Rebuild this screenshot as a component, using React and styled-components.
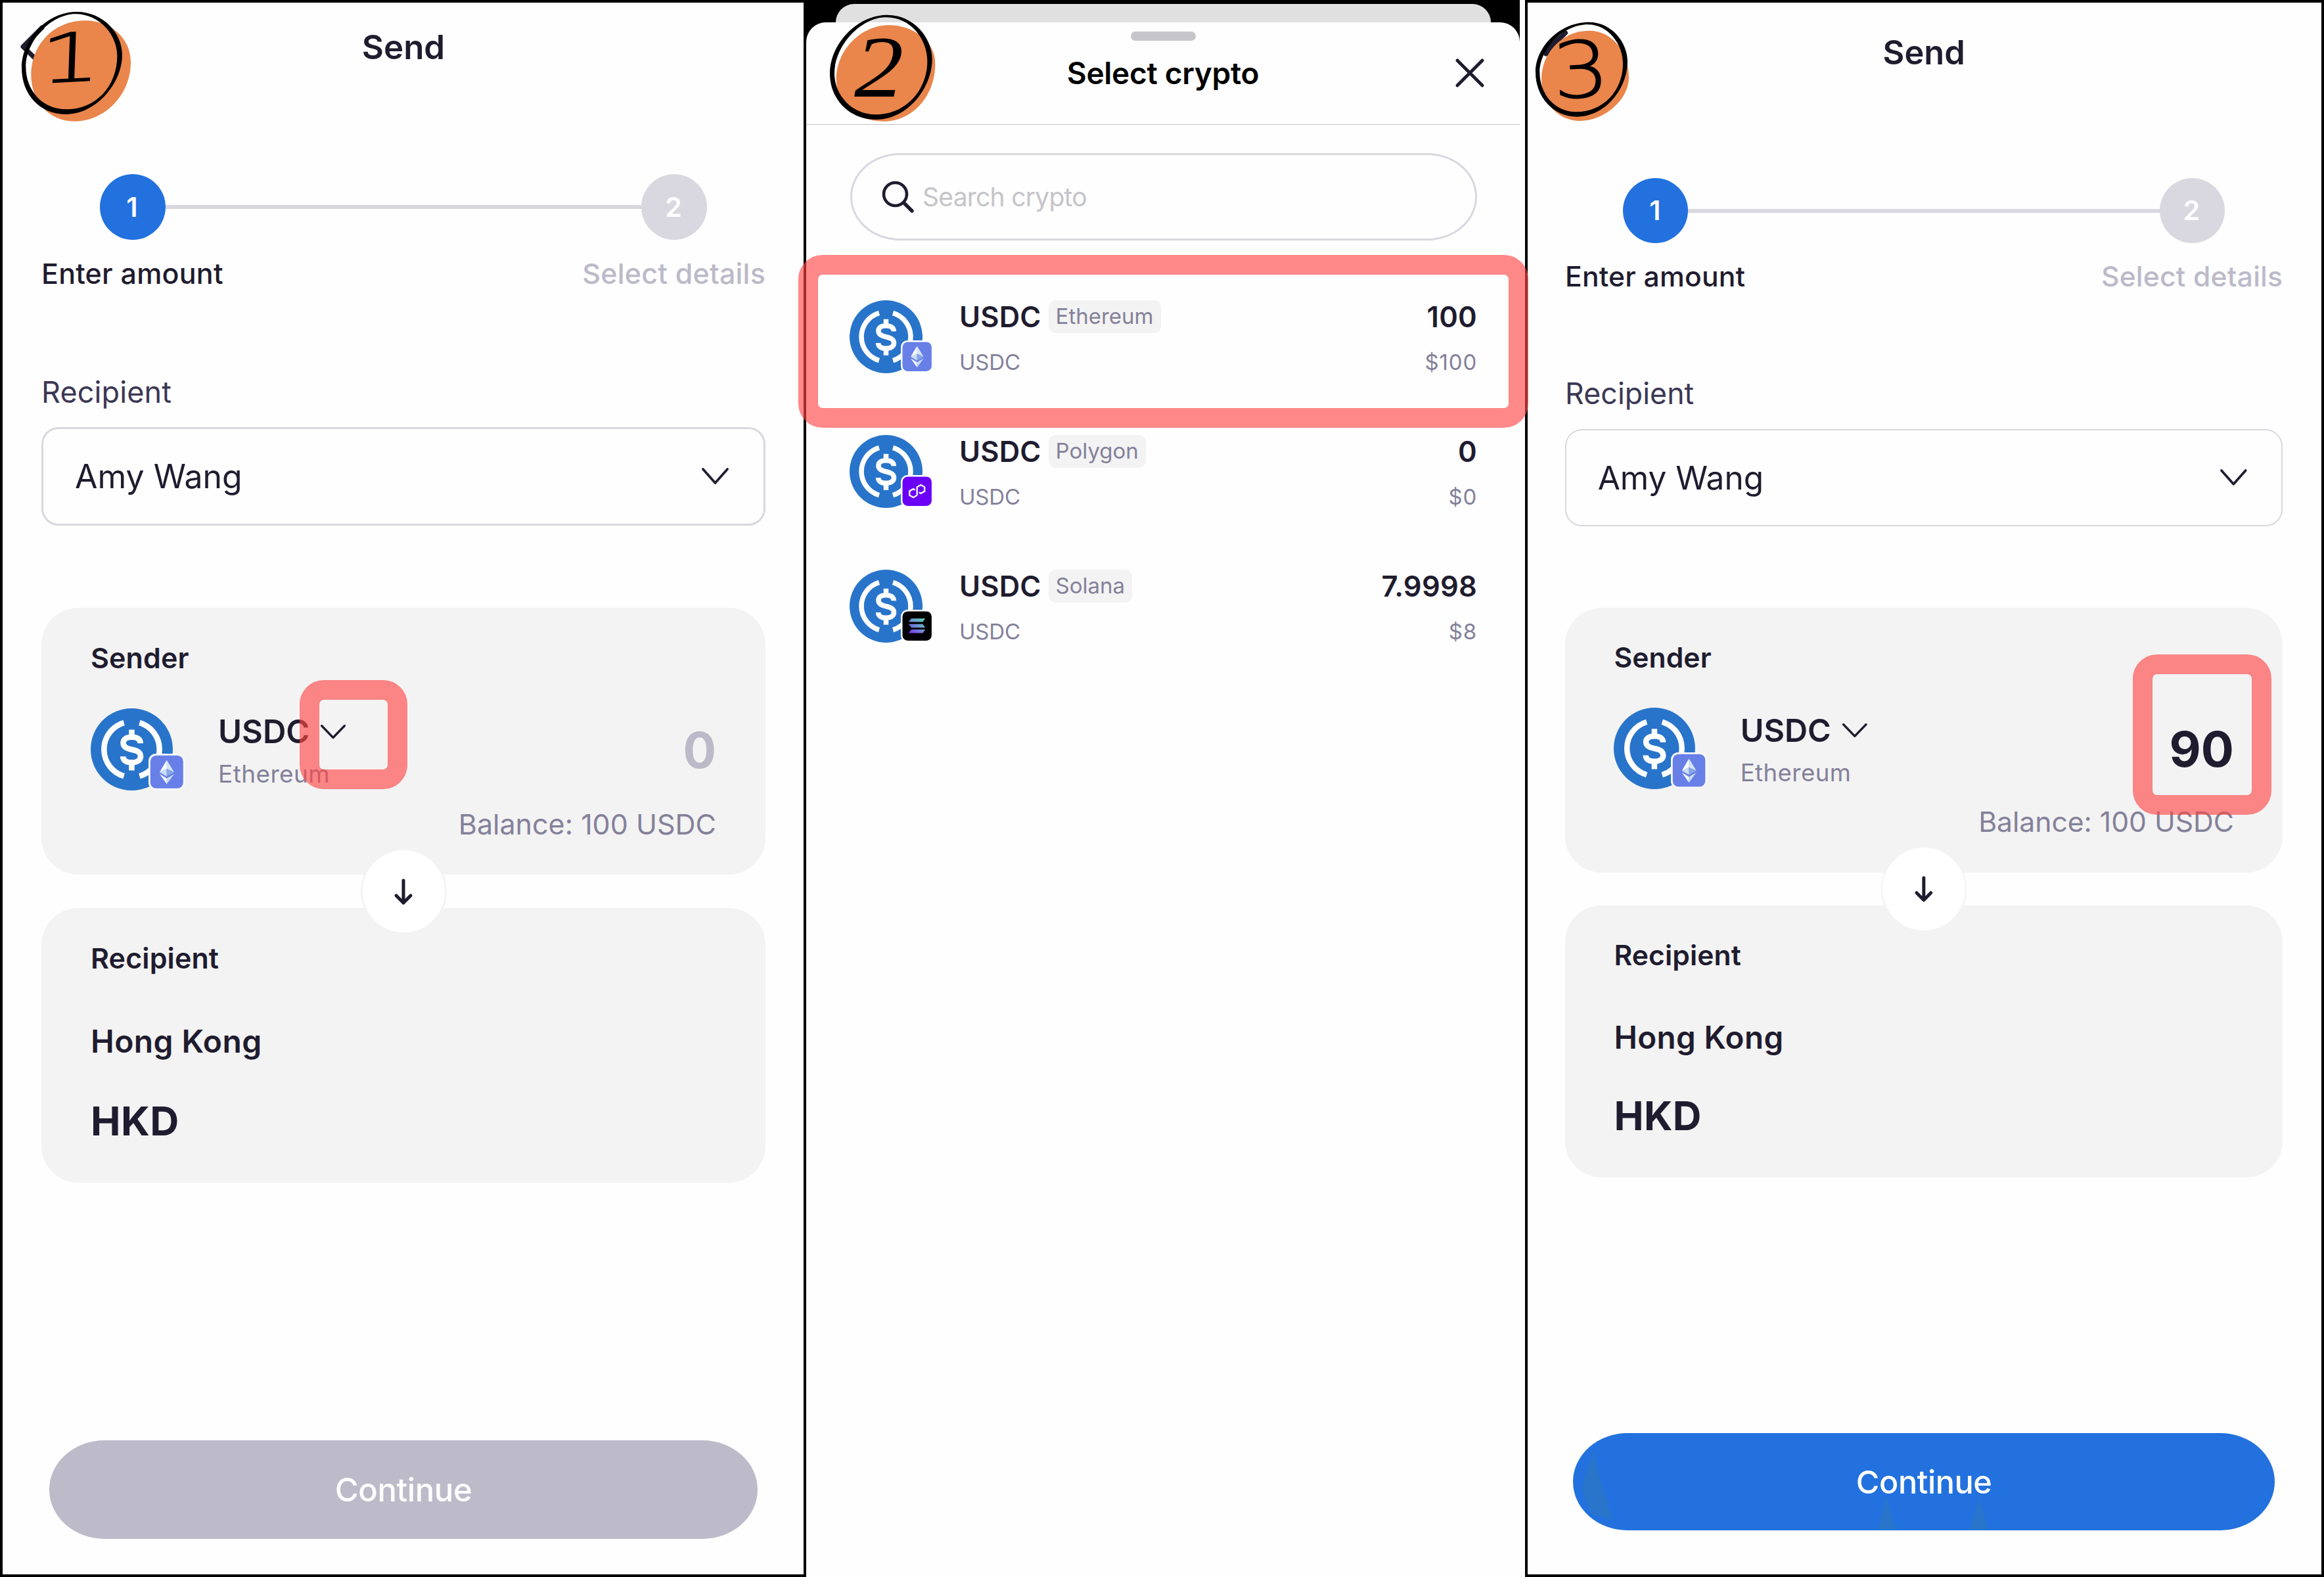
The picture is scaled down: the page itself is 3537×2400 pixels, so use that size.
import styled, { createGlobalStyle } from 'styled-components';

const tokens = [
    { chain: 'Ethereum', amount: '100', value: '$100' },
    { chain: 'Polygon', amount: '0', value: '$0' },
    { chain: 'Solana', amount: '7.9998', value: '$8' },
];

const App = () => {
    return (
        <Board>
            <GlobalStyle />
            <Frame $width={1227}>
                <SendScreen amount="0" />
            </Frame>
            <SelectScreen />
            <Frame $width={1216} $shifted>
                <SendScreen amount="90" active />
            </Frame>

            <Highlight $x={456} $y={1035} $w={164} $h={166} />
            <Highlight $x={1215} $y={388} $w={1111} $h={263} />
            <Highlight $x={3246} $y={996} $w={211} $h={244} />

            <Marker $x={0} viewBox="0 0 660 660">
                <path d="M142 340C142 210 240 94 390 94C500 94 597 170 597 285C597 430 480 554 340 554C220 554 142 460 142 340Z" fill="#ea854b" />
                <path
                    fillRule="evenodd"
                    d="M99 310C99 180 215 54 350 54C470 54 558 150 558 250C558 380 440 522 300 522C180 522 99 430 99 310Z
                       M118 305C118 190 230 64 345 64C455 64 535 160 535 255C535 393 438 499 305 499C190 499 118 410 118 305Z"
                />
                <Numeral transform="translate(176 380) rotate(-3) skewX(-5) scale(1.45 1)" fontSize="308">1</Numeral>
            </Marker>
            <Marker $x={1240} viewBox="0 0 660 660">
                <path d="M98 360C98 235 205 115 340 115C445 115 550 185 550 290C550 440 445 554 315 554C185 554 98 470 98 360Z" fill="#ea854b" />
                <path
                    fillRule="evenodd"
                    d="M69 335C69 200 195 68 330 68C450 68 536 170 536 270C536 400 425 546 280 546C160 546 69 455 69 335Z
                       M90 335C90 210 210 79 325 79C440 79 514 180 514 280C514 412 415 523 280 523C170 523 90 435 90 335Z"
                />
                <Numeral $serif transform="translate(180 440) scale(1.13 1)" fontSize="400">2</Numeral>
            </Marker>
            <Marker $x={2310} viewBox="0 0 660 660">
                <path d="M108 360C108 240 205 140 325 140C430 140 507 235 507 355C507 455 395 552 285 552C180 552 108 465 108 360Z" fill="#ea854b" />
                <path d="M208 160C178 180 145 210 128 247" fill="none" stroke="#1f1c2f" strokeWidth="20" strokeLinecap="round" />
                <path
                    fillRule="evenodd"
                    d="M81 330C81 215 190 101 325 101C430 101 501 195 501 280C501 405 400 533 270 533C160 533 81 440 81 330Z
                       M100 330C100 225 205 112 320 112C415 112 480 205 480 290C480 415 390 511 265 511C170 511 100 430 100 330Z"
                />
                <Numeral transform="translate(165 450) rotate(-3) scale(1.15 1)" fontSize="355">3</Numeral>
            </Marker>
        </Board>
    );
};

const SendScreen = ({ amount, active }) => {
    return (
        <Screen>
            <BackIcon viewBox="0 0 44 70">
                <path d="M39 6 10 35 39 63" />
            </BackIcon>
            <Title>Send</Title>
            <Stepper>
                <Step $current>1</Step>
                <StepLine />
                <Step>2</Step>
            </Stepper>
            <StepLabels>
                <StepLabel $current>Enter amount</StepLabel>
                <StepLabel>Select details</StepLabel>
            </StepLabels>
            <FieldLabel>Recipient</FieldLabel>
            <SelectBox>
                Amy Wang
                <Chevron width="43" height="28" />
            </SelectBox>
            <Card $height={406}>
                <CardLabel>Sender</CardLabel>
                <TokenRow>
                    <TokenIcon size={125} chain="Ethereum" edge="#f8f8fc" />
                    <TokenText>
                        <TokenName>
                            USDC
                            <Chevron width="40" height="24" />
                        </TokenName>
                        <TokenChain>Ethereum</TokenChain>
                    </TokenText>
                    <Amount $active={active}>{amount}</Amount>
                </TokenRow>
                <Balance>Balance: 100 USDC</Balance>
            </Card>
            <Gap>
                <ArrowCircle>
                    <svg width="34" height="42" viewBox="0 0 34 42">
                        <path d="M17 4V38M6 27 17 38 28 27" fill="none" stroke="#1f1c2f" strokeWidth="5" strokeLinecap="round" strokeLinejoin="round" />
                    </svg>
                </ArrowCircle>
            </Gap>
            <Card $height={418}>
                <CardLabel>Recipient</CardLabel>
                <Country>Hong Kong</Country>
                <Currency>HKD</Currency>
            </Card>
            <Button $active={active}>
                {active && (
                    <Shade viewBox="0 0 1078 150">
                        <path d="M31 24C27 50 17 62 15 84C18 106 24 118 29 124L60 133C52 98 39 70 31 24ZM481 97 468 148H496ZM624 100 610 148H637Z" />
                    </Shade>
                )}
                <span>Continue</span>
            </Button>
        </Screen>
    );
};

const SelectScreen = () => {
    return (
        <SheetFrame>
            <BackSheet />
            <Sheet>
                <Handle />
                <SheetHeader>
                    <SheetTitle>Select crypto</SheetTitle>
                    <CloseIcon viewBox="0 0 48 48">
                        <path d="M5 5 43 43M43 5 5 43" />
                    </CloseIcon>
                </SheetHeader>
                <Search>
                    <svg width="52" height="52" viewBox="0 0 52 52">
                        <circle cx="21.5" cy="21.5" r="17.5" fill="none" stroke="#1f1c2f" strokeWidth="4.6" />
                        <path d="M34.5 34.5 47 47" stroke="#1f1c2f" strokeWidth="5.4" strokeLinecap="round" />
                    </svg>
                    <span>Search crypto</span>
                </Search>
                {tokens.map((token) => (
                    <CoinRow key={token.chain}>
                        <TokenIcon size={111} chain={token.chain} edge="#fff" />
                        <CoinInfo>
                            <CoinName>
                                USDC
                                <Chip>{token.chain}</Chip>
                            </CoinName>
                            <CoinSub>USDC</CoinSub>
                        </CoinInfo>
                        <CoinAmounts>
                            <CoinName>{token.amount}</CoinName>
                            <CoinSub $wide>{token.value}</CoinSub>
                        </CoinAmounts>
                    </CoinRow>
                ))}
            </Sheet>
        </SheetFrame>
    );
};

const Chevron = ({ width, height }) => (
    <svg width={width} height={height} viewBox="0 0 44 28" preserveAspectRatio="none">
        <path d="M3 3 22 24 41 3" fill="none" stroke="#1f1c2f" strokeWidth="3.8" strokeLinecap="round" strokeLinejoin="round" />
    </svg>
);

const chainLogos = {
    Ethereum: (
        <>
            <rect width="124" height="124" rx="22" fill="#687fe8" />
            <path d="M62 17 35 63 62 50Z" fill="#fff" />
            <path d="M62 17 90 63 62 50Z" fill="#d3e6f6" />
            <path d="M35 63 62 50V79Z" fill="#c9dcf6" />
            <path d="M90 63 62 50V79Z" fill="#86a7e6" />
            <path d="M35 70 62 86V108Z" fill="#f4f8fd" />
            <path d="M90 70 62 86V108Z" fill="#c6dcf5" />
        </>
    ),
    Polygon: (
        <>
            <rect width="124" height="124" rx="22" fill="#6a00f5" />
            <path
                d="M62 79V44L78 35 94 44V62L78 71 70 66.500M62 79 46 88 30 79V61L46 52 54 56.500"
                fill="none"
                stroke="#f1edff"
                strokeWidth="7"
                strokeLinejoin="round"
            />
        </>
    ),
    Solana: (
        <>
            <defs>
                <linearGradient id="solana" gradientUnits="userSpaceOnUse" x1="92" y1="28" x2="36" y2="94">
                    <stop offset="0" stopColor="#55d6b4" />
                    <stop offset=".5" stopColor="#6f93d2" />
                    <stop offset="1" stopColor="#7a35f0" />
                </linearGradient>
            </defs>
            <rect width="124" height="124" rx="22" />
            <path d="M38 30H97L86 45H26ZM26 54H86L97 69H38ZM38 77H97L86 92H26Z" fill="url(#solana)" />
        </>
    ),
};

const TokenIcon = ({ size, chain, edge }) => (
    <Coin $size={size}>
        <svg width={size} height={size} viewBox="0 0 100 100">
            <circle cx="50" cy="50" r="50" fill="#2874ca" />
            <g fill="none" stroke="#fff" strokeWidth="6.800">
                <path d="M40.500 17.500A33.900 33.900 0 0 0 40.500 82.500M59.500 17.500A33.900 33.900 0 0 1 59.500 82.500" />
                <path d="M50 26V35M50 66V75.500" />
                <path d="M60.600 42.500C60.600 37.500 56.500 35 50 35C43.500 35 39.600 37.700 39.600 42.200C39.600 47 44 49 50 50.200C57 51.600 60.800 53.600 60.800 58.600C60.800 63.300 56.500 66 50 66C43.300 66 39.300 63.300 39.300 58.500" />
            </g>
        </svg>
        <ChainBadge $size={size} viewBox="-7 -7 138 138">
            <rect x="-7" y="-7" width="138" height="138" rx="28" fill={edge} />
            {chainLogos[chain]}
        </ChainBadge>
    </Coin>
);

const GlobalStyle = createGlobalStyle`
body {
    margin:0;
    background:#fff;
}
`

const Board = styled.div`
position:relative;
display:flex;
width:3537px;
height:2400px;
overflow:hidden;
background:#fff;
font-family:Inter, "Liberation Sans", sans-serif;
color:#1f1c2f;
`

const Frame = styled.div`
box-sizing:border-box;
width:${(p) => p.$width}px;
height:2400px;
border:4px solid #000;
background:#fefefe;

${(p) => p.$shifted && `
    margin-left:8px;
    padding-top:8.5px;

    > div {
        zoom:0.991;
        margin-left:-1.4px;
    }
`}
`

const Screen = styled.div`
position:relative;
display:flex;
flex-direction:column;
box-sizing:border-box;
width:1219px;
padding:38px 58px 0 59px;
`

const BackIcon = styled.svg`
position:absolute;
left:21px;
top:32px;
width:44px;
height:70px;
fill:none;
stroke:#1f1c2f;
stroke-width:7;
stroke-linecap:round;
stroke-linejoin:round;
`

const Title = styled.div`
text-align:center;
font-size:51px;
font-weight:600;
line-height:60px;
`

const Stepper = styled.div`
display:flex;
align-items:center;
margin:163px 89px 0 89px;
`

const Step = styled.div`
box-sizing:border-box;
width:100px;
height:100px;
padding-right:2px;
border-radius:50%;
background:${(p) => (p.$current ? '#2271de' : '#d9d8e0')};
color:#fff;
font-size:41px;
font-weight:600;
line-height:101px;
text-align:center;
`

const StepLine = styled.div`
flex:1;
height:6px;
background:#d9d8e0;
`

const StepLabels = styled.div`
display:flex;
justify-content:space-between;
margin-top:26px;
`

const StepLabel = styled.div`
font-size:43px;
font-weight:500;
line-height:50px;
letter-spacing:0.2px;
color:${(p) => (p.$current ? '#1f1c2f' : '#bcbac9')};
`

const FieldLabel = styled.div`
margin-top:129px;
font-size:45px;
line-height:54px;
letter-spacing:0.1px;
color:#3b3854;
`

const SelectBox = styled.div`
display:flex;
align-items:center;
justify-content:space-between;
box-sizing:border-box;
height:150px;
margin-top:26px;
padding:0 52px 0 48px;
border:3px solid #d9d8df;
border-radius:26px;
font-size:50px;
`

const Card = styled.div`
box-sizing:border-box;
height:${(p) => p.$height}px;
padding:51px 75px 0 75px;
border-radius:56px;
background:#f3f3f3;

${SelectBox} + & {
    margin-top:125px;
}
`

const CardLabel = styled.div`
font-size:43px;
font-weight:600;
line-height:50px;
letter-spacing:0.1px;
`

const TokenRow = styled.div`
display:flex;
align-items:center;
height:125px;
margin-top:52px;
`

const TokenText = styled.div`
margin-left:69px;
padding-top:3px;
`

const TokenName = styled.div`
display:flex;
align-items:center;
gap:16px;
font-size:49px;
font-weight:600;
line-height:58px;
`

const TokenChain = styled.div`
margin-top:13px;
font-size:37px;
line-height:44px;
letter-spacing:0.4px;
color:#84819a;
`

const Amount = styled.div`
margin-left:auto;
padding-top:3px;
font-size:75px;
font-weight:700;
line-height:90px;
color:${(p) => (p.$active ? '#1f1c2f' : '#bcbac9')};
`

const Balance = styled.div`
margin-top:26px;
text-align:right;
font-size:43px;
line-height:50px;
color:#84819a;
`

const Gap = styled.div`
display:flex;
align-items:center;
justify-content:center;
height:51px;
`

const ArrowCircle = styled.div`
position:relative;
z-index:1;
display:flex;
align-items:center;
justify-content:center;
flex:none;
box-sizing:border-box;
width:131px;
height:131px;
border:3px solid #f3f3f3;
border-radius:50%;
background:#fff;
`

const Country = styled.div`
margin-top:74px;
font-size:48px;
font-weight:600;
line-height:56px;
letter-spacing:0.4px;
`

const Currency = styled.div`
margin-top:60px;
font-size:61px;
font-weight:700;
line-height:66px;
letter-spacing:0.4px;
`

const Button = styled.div`
position:relative;
display:flex;
align-items:center;
justify-content:center;
height:150px;
margin:392px 12px 0;
border-radius:84px / 75px;
background:${(p) => (p.$active ? '#2271de' : '#bdbbca')};
color:#fff;
font-size:49px;
font-weight:500;
letter-spacing:-0.4px;

span {
    position:relative;
}
`

const Shade = styled.svg`
position:absolute;
left:0;
top:0;
width:1078px;
height:150px;
fill:#2875cb;
`

const SheetFrame = styled.div`
display:flex;
flex-direction:column;
width:1086px;
height:2400px;
background:linear-gradient(#000 0 100px, #fff 100px);
`

const BackSheet = styled.div`
height:28px;
margin:6px 44px 0 45px;
border-radius:28px 28px 0 0;
background:#e0e0e0;
`

const Sheet = styled.div`
flex:1;
display:flex;
flex-direction:column;
border-radius:30px 30px 0 0;
background:#fefefe;
`

const Handle = styled.div`
align-self:center;
width:99px;
height:14px;
margin-top:14px;
border-radius:7px;
background:#c6c5ca;
`

const SheetHeader = styled.div`
position:relative;
display:flex;
align-items:center;
justify-content:center;
height:97px;
padding-bottom:30px;
border-bottom:1px solid #c4c4c6;
`

const SheetTitle = styled.div`
font-size:46px;
font-weight:600;
line-height:56px;
letter-spacing:-0.3px;
color:#000;
`

const CloseIcon = styled.svg`
position:absolute;
right:52px;
top:25px;
width:48px;
height:48px;
stroke:#1f1c2f;
stroke-width:5;
stroke-linecap:round;
`

const Search = styled.div`
display:flex;
align-items:center;
gap:11px;
box-sizing:border-box;
height:133px;
margin:43px 65px 91px 67px;
padding-left:44px;
border:3px solid #d9d8e0;
border-radius:76px / 66px;
font-size:39px;
letter-spacing:-0.75px;
color:#c5c4c9;
`

const CoinRow = styled.div`
display:flex;
height:111px;
margin:0 65px 94px 66px;
`

const CoinInfo = styled.div`
margin-left:56px;
`

const CoinName = styled.div`
display:flex;
align-items:center;
height:50px;
font-size:43.500px;
font-weight:600;
letter-spacing:0.2px;
`

const Chip = styled.div`
height:50px;
margin-left:11px;
padding:0 11px;
border-radius:11px;
background:#f3f3f3;
font-size:33px;
font-weight:400;
line-height:49px;
letter-spacing:0;
color:#84819a;
`

const CoinSub = styled.div`
margin-top:24px;
font-size:33px;
line-height:40px;
letter-spacing:${(p) => (p.$wide ? '0.8px' : '-0.2px')};
color:#84819a;
`

const CoinAmounts = styled.div`
display:flex;
flex-direction:column;
align-items:flex-end;
margin-left:auto;
`

const Coin = styled.div`
position:relative;
flex:none;
width:${(p) => p.$size}px;
height:${(p) => p.$size}px;

> svg {
    display:block;
}
`

const ChainBadge = styled.svg`
position:absolute;
left:${(p) => p.$size * 0.703}px;
top:${(p) => p.$size * 0.552}px;
width:${(p) => p.$size * 0.445}px;
height:${(p) => p.$size * 0.445}px;
`

// translucent marker boxes drawn over the screens
const Highlight = styled.div`
position:absolute;
z-index:2;
box-sizing:border-box;
left:${(p) => p.$x}px;
top:${(p) => p.$y}px;
width:${(p) => p.$w}px;
height:${(p) => p.$h}px;
border:30px solid rgba(255, 69, 69, 0.64);
border-radius:37px;
`

const Marker = styled.svg`
position:absolute;
z-index:3;
left:${(p) => p.$x}px;
top:0;
width:220px;
height:220px;
`

const Numeral = styled.text`
font-family:${(p) => (p.$serif ? '"Liberation Serif", serif' : '"DejaVu Sans", sans-serif')};
font-style:${(p) => (p.$serif ? 'italic' : 'normal')};
font-weight:${(p) => (p.$serif ? 400 : 200)};
stroke:#000;
stroke-width:${(p) => (p.$serif ? 0 : 4)};
`

export default App;
